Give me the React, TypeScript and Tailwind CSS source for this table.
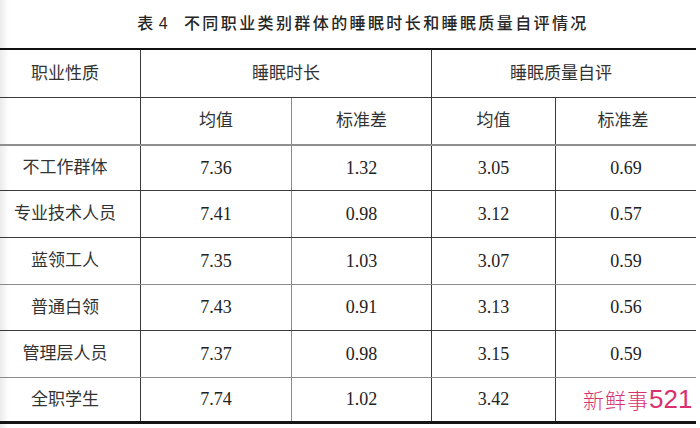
import React from "react"

const FONT = { fontFamily: '"Liberation Serif", "Noto Sans CJK SC", serif' }

type Row = { name: string; dur: string; durSd: string; q: string; qSd: string; h: string; line: string }

const rows: Row[] = [
  { name: "不工作群体", dur: "7.36", durSd: "1.32", q: "3.05", qSd: "0.69", h: "h-[45px]", line: "border-b border-[#3a3a3a]" },
  { name: "专业技术人员", dur: "7.41", durSd: "0.98", q: "3.12", qSd: "0.57", h: "h-[47px]", line: "border-b border-[#3a3a3a]" },
  { name: "蓝领工人", dur: "7.35", durSd: "1.03", q: "3.07", qSd: "0.59", h: "h-[47px]", line: "border-b border-[#8a8a8a]" },
  { name: "普通白领", dur: "7.43", durSd: "0.91", q: "3.13", qSd: "0.56", h: "h-[46px]", line: "border-b border-[#3a3a3a]" },
  { name: "管理层人员", dur: "7.37", durSd: "0.98", q: "3.15", qSd: "0.59", h: "h-[47px]", line: "border-b border-[#8a8a8a]" },
  { name: "全职学生", dur: "7.74", durSd: "1.02", q: "3.42", qSd: "", h: "h-[46px]", line: "border-b-[3px] border-[#151515]" },
]

const grid = "grid grid-cols-[141px_151px_140px_124px_140px] w-[696px]"
const cell = "flex items-center justify-center border-r"

export default function App() {
  return (
    <div
      className="relative w-[700px] h-[428px] overflow-hidden bg-[linear-gradient(to_right,#ebebeb,#ffffff_9px)] text-[#333]"
      style={FONT}
    >
      {/* caption */}
      <div className="h-[48px] flex items-center justify-center pl-[26px] pb-[2px]">
        <h1
          className="text-[16px] font-medium tracking-[2.4px] text-[#262626] leading-none"
          style={{ fontFamily: '"Noto Sans CJK SC", sans-serif' }}
        >
          表<span style={{ fontFamily: '"Liberation Sans", sans-serif' }} className="ml-[3px]">4</span>
          <span className="ml-[14px]">不同职业类别群体的睡眠时长和睡眠质量自评情况</span>
        </h1>
      </div>

      <div className="h-[2px] w-[696px] bg-[#111]" />

      {/* group header */}
      <div className={`${grid} h-[48px] border-b border-[#3a3a3a] text-[17px]`}>
        <div className={`${cell} border-[#3a3a3a] pr-[10px]`}>职业性质</div>
        <div className={`${cell} col-span-2 border-[#3a3a3a]`}>睡眠时长</div>
        <div className="col-span-2 flex items-center justify-center pr-[6px]">睡眠质量自评</div>
      </div>

      {/* sub header */}
      <div className={`${grid} h-[48px] border-b-2 border-[#8f8f8f] text-[17px]`}>
        <div className={`${cell} border-[#3a3a3a]`} />
        <div className={`${cell} border-[#8a8a8a]`}>均值</div>
        <div className={`${cell} border-[#3a3a3a]`}>标准差</div>
        <div className={`${cell} border-[#3a3a3a]`}>均值</div>
        <div className="flex items-center justify-center pr-[6px]">标准差</div>
      </div>

      {rows.map((r) => (
        <div key={r.name} className={`${grid} ${r.h} ${r.line}`}>
          <div className={`${cell} border-[#3a3a3a] pr-[10px] text-[17px]`}>{r.name}</div>
          <div className={`${cell} border-[#8a8a8a] text-[18px] text-[#222]`}>{r.dur}</div>
          <div className={`${cell} border-[#3a3a3a] text-[18px] text-[#222]`}>{r.durSd}</div>
          <div className={`${cell} border-[#3a3a3a] text-[18px] text-[#222]`}>{r.q}</div>
          <div className="flex items-center justify-center text-[18px] text-[#222]">{r.qSd}</div>
        </div>
      ))}

      {/* watermark */}
      <div className="absolute left-[583px] top-[386px] flex items-baseline text-[#d9306f] leading-[26px]">
        <span className="text-[21px] tracking-[1px] font-light" style={{ fontFamily: '"Noto Sans CJK SC", sans-serif' }}>
          新鲜事
        </span>
        <span className="text-[26px]" style={{ fontFamily: '"Liberation Sans", sans-serif' }}>
          521
        </span>
      </div>
    </div>
  )
}
